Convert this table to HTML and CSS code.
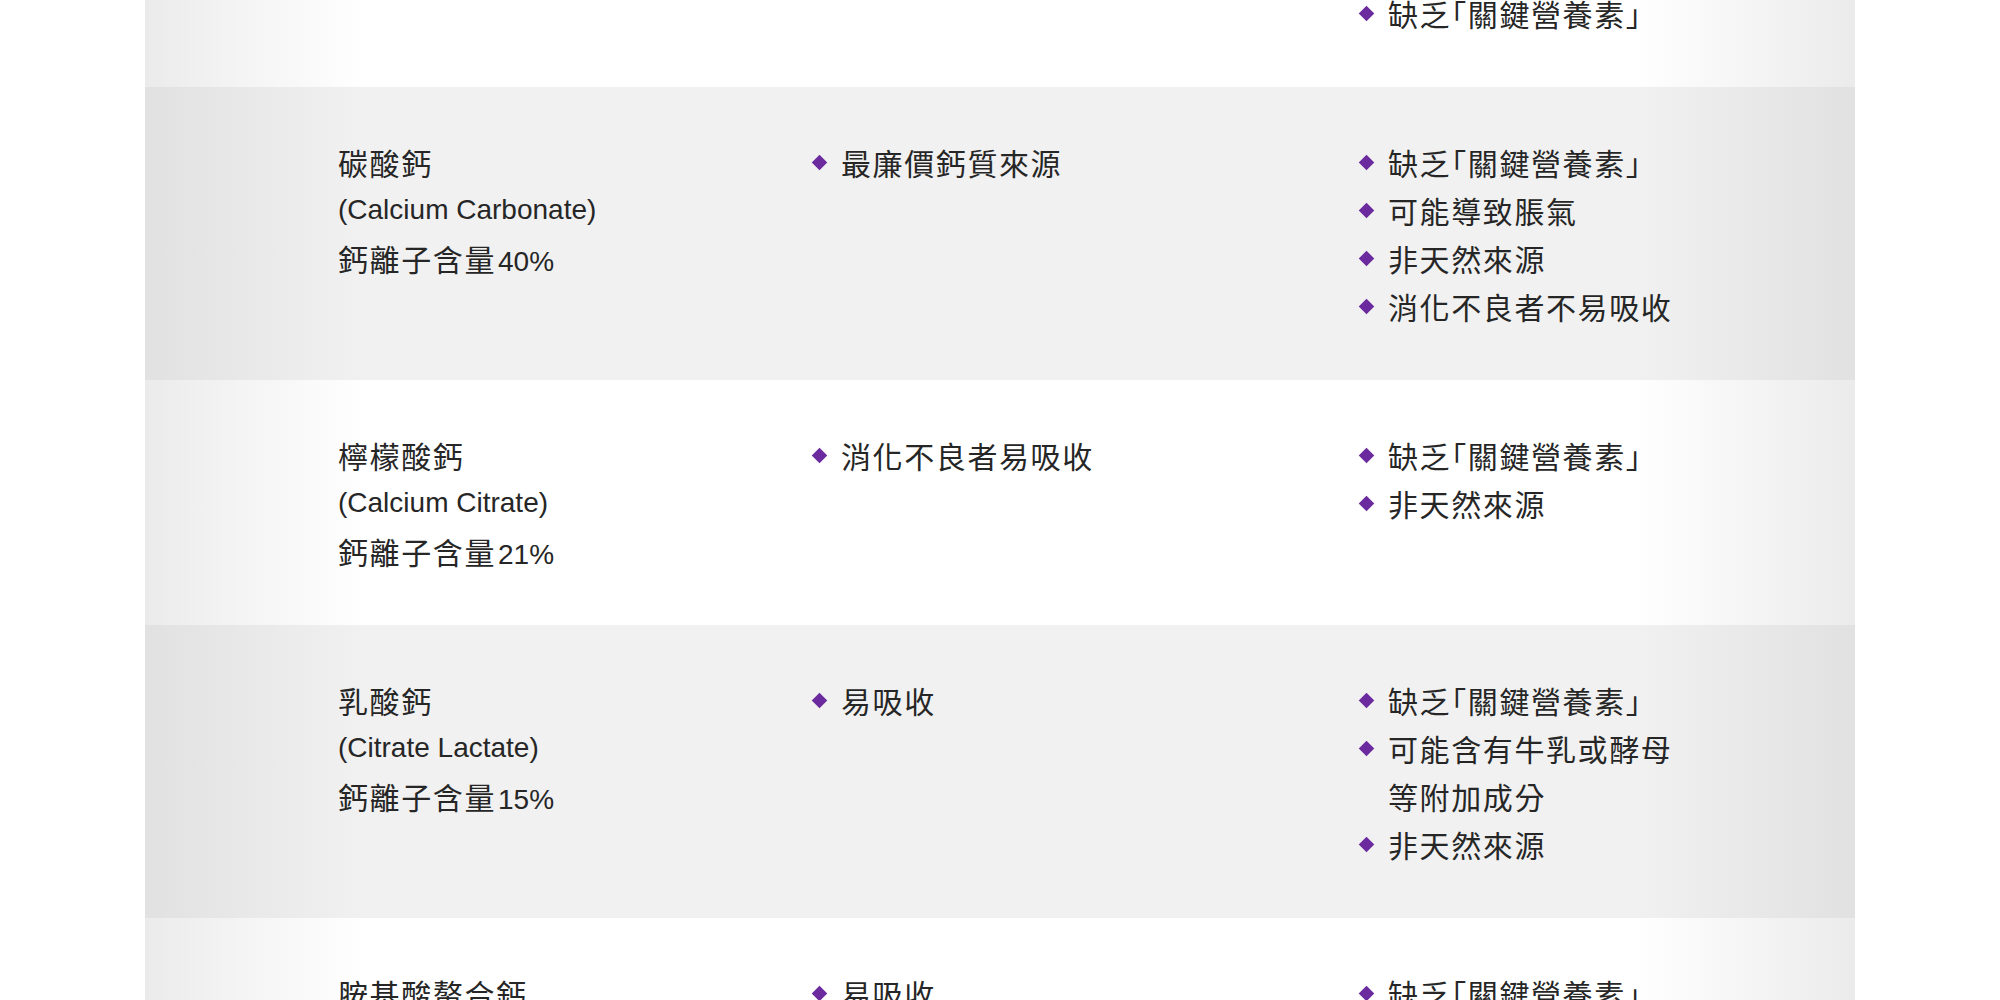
FILE: index.html
```html
<!DOCTYPE html>
<html lang="zh-Hant">
<head>
<meta charset="utf-8">
<title>鈣質比較</title>
<link rel="stylesheet" href="styles.css">
</head>
<body>
<div class="table">
  <div class="row light">
    <div class="cell name"></div>
    <ul class="cell list"></ul>
    <ul class="cell list">
      <li><span class="dot"></span><span class="txt">缺乏「關鍵營養素」</span></li>
    </ul>
  </div>
  <div class="row dark">
    <div class="cell name">
      <p>碳酸鈣</p>
      <p class="en">(Calcium Carbonate)</p>
      <p>鈣離子含量<span class="num">40%</span></p>
    </div>
    <ul class="cell list">
      <li><span class="dot"></span><span class="txt">最廉價鈣質來源</span></li>
    </ul>
    <ul class="cell list">
      <li><span class="dot"></span><span class="txt">缺乏「關鍵營養素」</span></li>
      <li><span class="dot"></span><span class="txt">可能導致脹氣</span></li>
      <li><span class="dot"></span><span class="txt">非天然來源</span></li>
      <li><span class="dot"></span><span class="txt">消化不良者不易吸收</span></li>
    </ul>
  </div>
  <div class="row light">
    <div class="cell name">
      <p>檸檬酸鈣</p>
      <p class="en">(Calcium Citrate)</p>
      <p>鈣離子含量<span class="num">21%</span></p>
    </div>
    <ul class="cell list">
      <li><span class="dot"></span><span class="txt">消化不良者易吸收</span></li>
    </ul>
    <ul class="cell list">
      <li><span class="dot"></span><span class="txt">缺乏「關鍵營養素」</span></li>
      <li><span class="dot"></span><span class="txt">非天然來源</span></li>
    </ul>
  </div>
  <div class="row dark">
    <div class="cell name">
      <p>乳酸鈣</p>
      <p class="en">(Citrate Lactate)</p>
      <p>鈣離子含量<span class="num">15%</span></p>
    </div>
    <ul class="cell list">
      <li><span class="dot"></span><span class="txt">易吸收</span></li>
    </ul>
    <ul class="cell list">
      <li><span class="dot"></span><span class="txt">缺乏「關鍵營養素」</span></li>
      <li><span class="dot"></span><span class="txt">可能含有牛乳或酵母<br>等附加成分</span></li>
      <li><span class="dot"></span><span class="txt">非天然來源</span></li>
    </ul>
  </div>
  <div class="row light">
    <div class="cell name">
      <p>胺基酸螯合鈣</p>
    </div>
    <ul class="cell list">
      <li><span class="dot"></span><span class="txt">易吸收</span></li>
    </ul>
    <ul class="cell list">
      <li><span class="dot"></span><span class="txt">缺乏「關鍵營養素」</span></li>
    </ul>
  </div>
</div>
</body>
</html>
```
FILE: styles.css
```css
html, body {
  margin: 0;
  padding: 0;
  background: #ffffff;
  overflow: hidden;
  height: 1000px;
}
body {
  font-family: "Noto Sans CJK TC", "Noto Sans", sans-serif;
  color: #262626;
  font-size: 30px;
  line-height: 48px;
  letter-spacing: 1.6px;
  font-feature-settings: "halt";
}
.table {
  width: 1710px;
  margin: -62px auto 0;
}
.row {
  display: grid;
  grid-template-columns: 473px 547px 1fr;
  padding: 51px 0 50px 193px;
}
.row.light {
  background: linear-gradient(to right, #ebebeb 0, #ffffff 220px, #ffffff calc(100% - 220px), #ebebeb 100%);
}
.row.dark {
  background: linear-gradient(to right, #e1e1e1 0, #f1f1f1 220px, #f1f1f1 calc(100% - 220px), #e1e1e1 100%);
}
.cell {
  margin: 0;
  padding: 0;
}
.name p {
  margin: 0;
  height: 48px;
  white-space: nowrap;
}
.en,
.num {
  font-family: "Liberation Sans", sans-serif;
  font-size: 28px;
  letter-spacing: 0;
}
.num {
  margin-left: 2px;
  line-height: 1;
}
.list {
  list-style: none;
}
.list li {
  display: flex;
  align-items: flex-start;
}
.dot {
  flex: none;
  width: 16px;
  height: 48px;
  margin-right: 14px;
  display: flex;
  align-items: center;
  justify-content: center;
}
.dot::before {
  content: "";
  width: 11px;
  height: 11px;
  background: #6b2a9e;
  transform: rotate(45deg);
}
.txt {
  display: block;
}
```
